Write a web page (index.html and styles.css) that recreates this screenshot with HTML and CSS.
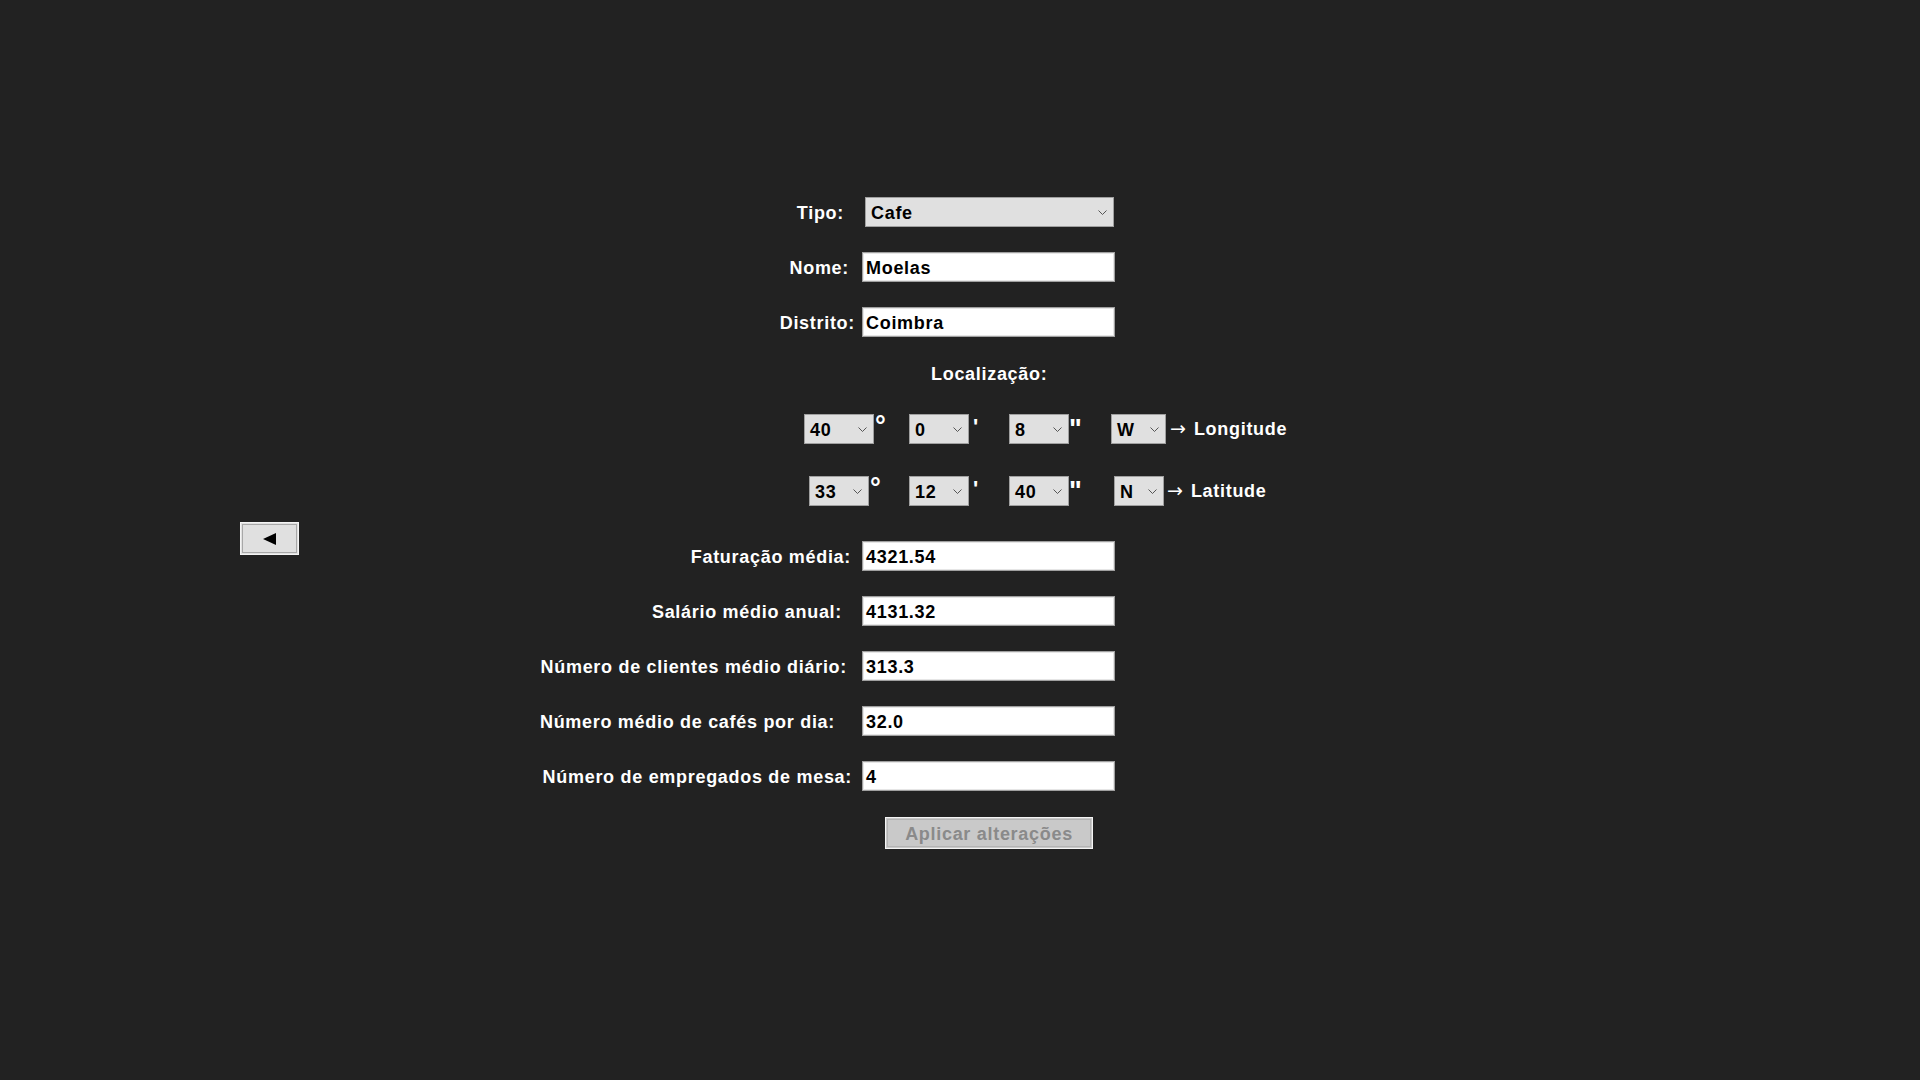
FILE: index.html
```html
<!DOCTYPE html>
<html lang="pt">
<head>
<meta charset="utf-8">
<title>Editar estabelecimento</title>
<link rel="stylesheet" href="styles.css">
</head>
<body>
<div class="page">
  <div class="side">
    <button class="back-btn" type="button" aria-label="Voltar">
      <svg width="13" height="12" viewBox="0 0 13 12"><polygon points="0,6 13,0 13,12" fill="#000"/></svg>
    </button>
  </div>
  <div class="form">
    <div class="row">
      <div class="label pr-tipo">Tipo:</div>
      <div class="select select-tipo"><span>Cafe</span><svg class="chev" width="9" height="5" viewBox="0 0 9 5"><polyline points="0.5,0.5 4.5,4.5 8.5,0.5" fill="none" stroke="#555" stroke-width="1"/></svg></div>
    </div>
    <div class="row">
      <div class="label pr-nome">Nome:</div>
      <div class="input">Moelas</div>
    </div>
    <div class="row">
      <div class="label pr-distrito">Distrito:</div>
      <div class="input">Coimbra</div>
    </div>
    <div class="loc-title">Localização:</div>
    <div class="coord coord-lon">
      <div class="select w70"><span>40</span><svg class="chev" width="9" height="5" viewBox="0 0 9 5"><polyline points="0.5,0.5 4.5,4.5 8.5,0.5" fill="none" stroke="#555" stroke-width="1"/></svg></div>
      <span class="mark deg m35">°</span>
      <div class="select w60"><span>0</span><svg class="chev" width="9" height="5" viewBox="0 0 9 5"><polyline points="0.5,0.5 4.5,4.5 8.5,0.5" fill="none" stroke="#555" stroke-width="1"/></svg></div>
      <span class="mark min m40">'</span>
      <div class="select w60"><span>8</span><svg class="chev" width="9" height="5" viewBox="0 0 9 5"><polyline points="0.5,0.5 4.5,4.5 8.5,0.5" fill="none" stroke="#555" stroke-width="1"/></svg></div>
      <span class="mark sec m42">"</span>
      <div class="select w55"><span>W</span><svg class="chev" width="9" height="5" viewBox="0 0 9 5"><polyline points="0.5,0.5 4.5,4.5 8.5,0.5" fill="none" stroke="#555" stroke-width="1"/></svg></div>
      <span class="axis axis-lon"><span class="arrow">→</span>Longitude</span>
    </div>
    <div class="coord coord-lat">
      <div class="select w60"><span>33</span><svg class="chev" width="9" height="5" viewBox="0 0 9 5"><polyline points="0.5,0.5 4.5,4.5 8.5,0.5" fill="none" stroke="#555" stroke-width="1"/></svg></div>
      <span class="mark deg m40">°</span>
      <div class="select w60"><span>12</span><svg class="chev" width="9" height="5" viewBox="0 0 9 5"><polyline points="0.5,0.5 4.5,4.5 8.5,0.5" fill="none" stroke="#555" stroke-width="1"/></svg></div>
      <span class="mark min m40">'</span>
      <div class="select w60"><span>40</span><svg class="chev" width="9" height="5" viewBox="0 0 9 5"><polyline points="0.5,0.5 4.5,4.5 8.5,0.5" fill="none" stroke="#555" stroke-width="1"/></svg></div>
      <span class="mark sec m45">"</span>
      <div class="select w50"><span>N</span><svg class="chev" width="9" height="5" viewBox="0 0 9 5"><polyline points="0.5,0.5 4.5,4.5 8.5,0.5" fill="none" stroke="#555" stroke-width="1"/></svg></div>
      <span class="axis axis-lat"><span class="arrow">→</span>Latitude</span>
    </div>
    <div class="row row-first-num">
      <div class="label pr-fat">Faturação média:</div>
      <div class="input">4321.54</div>
    </div>
    <div class="row">
      <div class="label pr-sal">Salário médio anual:</div>
      <div class="input">4131.32</div>
    </div>
    <div class="row">
      <div class="label pr-cli">Número de clientes médio diário:</div>
      <div class="input">313.3</div>
    </div>
    <div class="row">
      <div class="label pr-caf">Número médio de cafés por dia:</div>
      <div class="input">32.0</div>
    </div>
    <div class="row">
      <div class="label pr-emp">Número de empregados de mesa:</div>
      <div class="input">4</div>
    </div>
    <div class="actions">
      <button class="apply-btn" type="button" disabled>Aplicar alterações</button>
    </div>
  </div>
</div>
</body>
</html>
```

FILE: styles.css
```css
html, body {
  margin: 0;
  padding: 0;
}
body {
  background: #222222;
  font-family: "Liberation Sans", Arial, sans-serif;
  font-weight: bold;
  font-size: 18px;
  letter-spacing: 0.7px;
  color: #ffffff;
}
.page {
  display: flex;
  width: 1920px;
  height: 1080px;
  overflow: hidden;
}
.side {
  width: 539px;
  flex: none;
  box-sizing: border-box;
  padding-left: 240px;
  padding-top: 522px;
}
.back-btn {
  width: 59px;
  height: 33px;
  box-sizing: border-box;
  margin: 0;
  padding: 0;
  background: #e0e0e0;
  border: 1px solid #f4f4f4;
  box-shadow: inset 0 0 0 1px #e0e0e0, inset 0 0 0 2px #a8a8a8;
  display: flex;
  align-items: center;
  justify-content: center;
}
.back-btn svg { display: block; }
.form {
  display: flex;
  flex-direction: column;
  padding-top: 197px;
}
.row {
  display: flex;
  align-items: center;
  height: 30px;
  margin-bottom: 25px;
}
.label {
  width: 323px;
  flex: none;
  box-sizing: border-box;
  text-align: right;
  white-space: nowrap;
  padding-top: 2px;
}
.pr-tipo { padding-right: 18px; }
.pr-nome { padding-right: 13px; }
.pr-distrito { padding-right: 7px; }
.pr-fat { padding-right: 11px; }
.pr-sal { padding-right: 20px; }
.pr-cli { padding-right: 15px; }
.pr-caf { padding-right: 27px; }
.pr-emp { padding-right: 10px; }

.input {
  width: 253px;
  height: 30px;
  box-sizing: border-box;
  background: #ffffff;
  color: #000000;
  border: 1px solid #a0a0a0;
  box-shadow: inset 0 0 0 1px #e6e6e6;
  padding: 2px 3px 0;
  display: flex;
  align-items: center;
}
.select {
  height: 30px;
  box-sizing: border-box;
  background: #e0e0e0;
  color: #000000;
  border: 1px solid #a0a0a0;
  padding: 0 6px 0 5px;
  display: flex;
  align-items: center;
  justify-content: space-between;
  flex: none;
}
.select span { padding-top: 2px; }
.chev { display: block; flex: none; }
.select-tipo {
  width: 249px;
  margin-left: 3px;
}
.w70 { width: 70px; }
.w60 { width: 60px; }
.w55 { width: 55px; }
.w50 { width: 50px; }

.loc-title {
  height: 30px;
  line-height: 30px;
  margin-top: -3px;
  padding-left: 392px;
  margin-bottom: 25px;
}
.coord {
  display: flex;
  align-items: flex-start;
  height: 30px;
}
.coord-lon {
  padding-left: 265px;
  margin-bottom: 32px;
}
.coord-lat {
  padding-left: 270px;
  margin-bottom: 35px;
}
.mark {
  flex: none;
  box-sizing: border-box;
  line-height: 1;
  color: #ffffff;
  letter-spacing: 0;
}
.deg {
  font-size: 27px;
  padding-left: 1px;
  margin-top: -1px;
}
.min {
  font-size: 22px;
  padding-left: 4px;
  margin-top: 2px;
}
.sec {
  font-size: 27px;
  padding-left: 0;
  margin-top: 2px;
}
.m35 { width: 35px; }
.m40 { width: 40px; }
.m42 { width: 42px; }
.m45 { width: 45px; }
.axis {
  display: flex;
  align-items: center;
  height: 30px;
  white-space: nowrap;
}
.arrow {
  font-family: "DejaVu Sans", sans-serif;
  font-weight: normal;
  font-size: 19px;
  line-height: 1;
  letter-spacing: 0;
  margin-right: 8px;
  margin-top: -1px;
}
.axis-lon { margin-left: 4px; }
.axis-lat { margin-left: 3px; }

.actions {
  margin-top: 1px;
  padding-left: 346px;
}
.apply-btn {
  width: 208px;
  height: 32px;
  box-sizing: border-box;
  margin: 0;
  padding: 2px 0 0;
  font-family: "Liberation Sans", Arial, sans-serif;
  font-weight: bold;
  font-size: 18px;
  letter-spacing: 0.7px;
  color: #8a8a8a;
  background: #c9c9c9;
  border: 1px solid #f4f4f4;
  box-shadow: inset 0 0 0 1px #c9c9c9, inset 0 0 0 2px #b4b4b4;
}
```
